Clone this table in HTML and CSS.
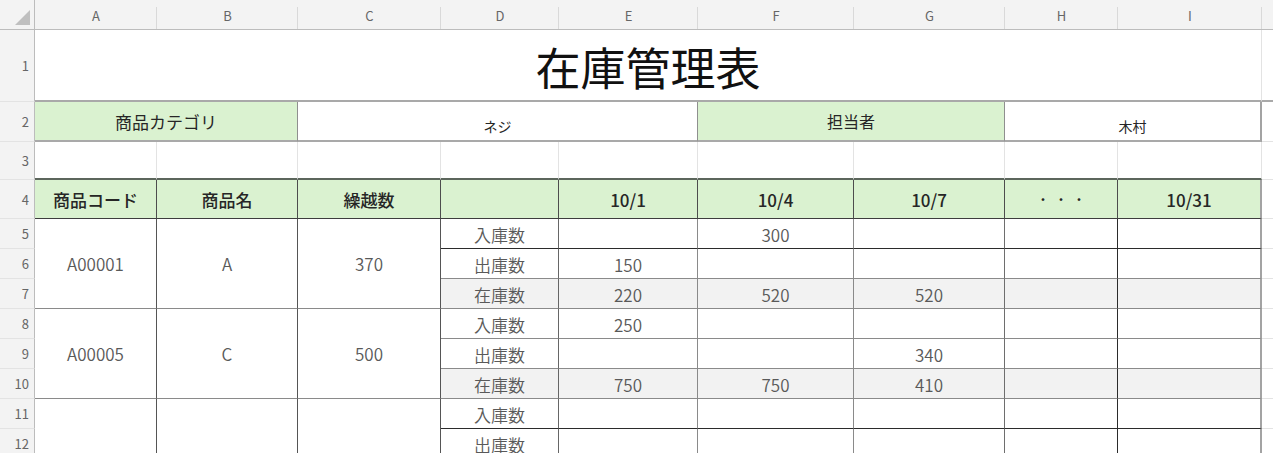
FILE: index.html
```html
<!DOCTYPE html>
<html lang="ja">
<head>
<meta charset="utf-8">
<title>在庫管理表</title>
<link rel="stylesheet" href="styles.css">
</head>
<body>
<div class="sheet">
  <!-- column headers -->
  <div class="corner"><svg class="corner-tri" width="16" height="16" viewBox="0 0 16 16"><polygon points="15,0 15,15 0,15" fill="#bfbfbf"/></svg></div>
  <div class="ch">A</div><div class="ch">B</div><div class="ch">C</div><div class="ch">D</div><div class="ch">E</div><div class="ch">F</div><div class="ch">G</div><div class="ch">H</div><div class="ch">I</div><div class="ch ch-j"></div>

  <!-- row 1 -->
  <div class="rh">1</div>
  <div class="title">在庫管理表</div>
  <div class="j j-title"></div>

  <!-- row 2 -->
  <div class="rh">2</div>
  <div class="info label c2">商品カテゴリ</div>
  <div class="info value c3 small">ネジ</div>
  <div class="info label c2 label-sm">担当者</div>
  <div class="info value c2 last small">木村</div>
  <div class="j"></div>

  <!-- row 3 -->
  <div class="rh">3</div>
  <div class="blank"></div><div class="blank"></div><div class="blank"></div><div class="blank"></div><div class="blank"></div><div class="blank"></div><div class="blank"></div><div class="blank"></div><div class="blank"></div>
  <div class="j"></div>

  <!-- row 4 -->
  <div class="rh">4</div>
  <div class="hd">商品コード</div>
  <div class="hd">商品名</div>
  <div class="hd">繰越数</div>
  <div class="hd"></div>
  <div class="hd">10/1</div>
  <div class="hd">10/4</div>
  <div class="hd">10/7</div>
  <div class="hd dots">・・・</div>
  <div class="hd hd-last">10/31</div>
  <div class="j"></div>

  <!-- row 5 -->
  <div class="rh">5</div>
  <div class="m r3">A00001</div>
  <div class="m r3">A</div>
  <div class="m r3">370</div>
  <div class="d lb h-dk">入庫数</div>
  <div class="d h-dk"></div>
  <div class="d h-dk">300</div>
  <div class="d h-dk v-gr"></div>
  <div class="d h-dk v-dk"></div>
  <div class="d h-dk last"></div>
  <div class="j"></div>

  <!-- row 6 -->
  <div class="rh">6</div>
  <div class="d lb">出庫数</div>
  <div class="d">150</div>
  <div class="d"></div>
  <div class="d v-gr"></div>
  <div class="d v-dk"></div>
  <div class="d last"></div>
  <div class="j"></div>

  <!-- row 7 -->
  <div class="rh">7</div>
  <div class="d lb gray">在庫数</div>
  <div class="d gray">220</div>
  <div class="d gray">520</div>
  <div class="d gray v-gr">520</div>
  <div class="d gray v-dk"></div>
  <div class="d gray last"></div>
  <div class="j"></div>

  <!-- row 8 -->
  <div class="rh">8</div>
  <div class="m r3">A00005</div>
  <div class="m r3">C</div>
  <div class="m r3">500</div>
  <div class="d lb">入庫数</div>
  <div class="d">250</div>
  <div class="d"></div>
  <div class="d v-gr"></div>
  <div class="d v-dk"></div>
  <div class="d last"></div>
  <div class="j"></div>

  <!-- row 9 -->
  <div class="rh">9</div>
  <div class="d lb">出庫数</div>
  <div class="d"></div>
  <div class="d"></div>
  <div class="d v-gr">340</div>
  <div class="d v-dk"></div>
  <div class="d last"></div>
  <div class="j"></div>

  <!-- row 10 -->
  <div class="rh">10</div>
  <div class="d lb gray">在庫数</div>
  <div class="d gray">750</div>
  <div class="d gray">750</div>
  <div class="d gray v-gr">410</div>
  <div class="d gray v-dk"></div>
  <div class="d gray last"></div>
  <div class="j"></div>

  <!-- row 11 -->
  <div class="rh">11</div>
  <div class="m r3"></div>
  <div class="m r3"></div>
  <div class="m r3"></div>
  <div class="d lb h-dk">入庫数</div>
  <div class="d h-dk"></div>
  <div class="d h-dk"></div>
  <div class="d h-dk v-gr"></div>
  <div class="d h-dk v-dk"></div>
  <div class="d h-dk last"></div>
  <div class="j"></div>

  <!-- row 12 -->
  <div class="rh">12</div>
  <div class="d lb">出庫数</div>
  <div class="d"></div>
  <div class="d"></div>
  <div class="d v-gr"></div>
  <div class="d v-dk"></div>
  <div class="d last"></div>
  <div class="j"></div>
</div>
</body>
</html>
```

FILE: styles.css
```css
* { box-sizing: border-box; }

html, body {
  margin: 0;
  padding: 0;
  background: #ffffff;
  overflow: hidden;
}

body {
  width: 1273px;
  height: 453px;
  font-family: "Noto Sans CJK JP", "Noto Sans", sans-serif;
  color: #262626;
}

.sheet {
  display: grid;
  grid-template-columns: 35px 122px 141px 143px 118px 139px 156px 151px 113px 144px 1fr;
  grid-template-rows: 30px 72px 40px 38px 39px repeat(8, 30px);
}

.sheet > div {
  display: flex;
  align-items: center;
  justify-content: center;
  min-width: 0;
  white-space: nowrap;
}

/* header row */
.corner {
  background: #f3f3f3;
  border-right: 1px solid #bcbcbc;
  border-bottom: 1px solid #bcbcbc;
}
.sheet > .corner {
  align-items: flex-end;
  justify-content: flex-end;
  padding: 0 3px 3px 0;
}

.ch {
  background: linear-gradient(#d9d9d9, #d9d9d9) right 7px / 1px calc(100% - 7px) no-repeat, #f3f3f3;
  border-bottom: 1px solid #bcbcbc;
  color: #666666;
  font-size: 13px;
  padding-top: 2px;
}
.ch-j { background: #f3f3f3; }

/* row headers */
.rh {
  background: #f3f3f3;
  border-right: 1px solid #bcbcbc;
  border-bottom: 1px solid #e3e3e3;
  color: #666666;
  font-size: 13px;
}
.sheet > .rh {
  justify-content: flex-end;
  padding-right: 5px;
}

/* column J filler */
.j {
  border-bottom: 1px solid #e3e3e3;
}
.j-title {
  border-bottom: 2px solid #a9a9a9;
}

/* title row */
.title {
  grid-column: span 9;
  font-size: 45px;
  color: #111111;
  border-bottom: 2px solid #a9a9a9;
  border-right: 1px solid #e3e3e3;
  padding-top: 2px;
}

/* row 2 */
.info {
  border-right: 1px solid #8f8f8f;
  border-bottom: 2px solid #a9a9a9;
  font-size: 17px;
  color: #262626;
}
.label { background: #daf2d0; }
.label-sm { font-size: 16px; }
.value { background: #ffffff; }
.small { font-size: 14px; padding-top: 9px; }
.c2 { grid-column: span 2; }
.c3 { grid-column: span 3; }
.info.last { border-right: 2px solid #a3a3a3; }

/* row 3 */
.blank {
  border-right: 1px solid #e3e3e3;
  border-bottom: 2px solid #5c665c;
}

/* row 4 */
.hd {
  background: #daf2d0;
  border-right: 1px solid #4d4d4d;
  border-bottom: 1px solid #3d3d3d;
  font-size: 17px;
  font-weight: 500;
  color: #262626;
}
.hd-last { border-right: 2px solid #a3a3a3; }
.dots { font-size: 12px; letter-spacing: 6px; padding-left: 6px; }

/* merged item cells */
.m {
  grid-row: span 3;
  border-right: 1px solid #555555;
  border-bottom: 1px solid #8a8a8a;
  font-size: 17px;
  font-weight: 350;
  color: #595959;
  background: #ffffff;
}

/* data cells */
.d {
  border-right: 1px solid #8a8a8a;
  border-bottom: 1px solid #8a8a8a;
  font-size: 17px;
  font-weight: 350;
  color: #595959;
  background: #ffffff;
}
.sheet > .d { padding-top: 1px; }
.lb { border-right-color: #666666; }
.gray { background: #f2f2f2; }
.h-dk { border-bottom-color: #2b2b2b; }
.v-gr { border-right-color: #6e6e6e; }
.v-dk { border-right-color: #2b2b2b; }
.d.last { border-right: 2px solid #a3a3a3; }
```
